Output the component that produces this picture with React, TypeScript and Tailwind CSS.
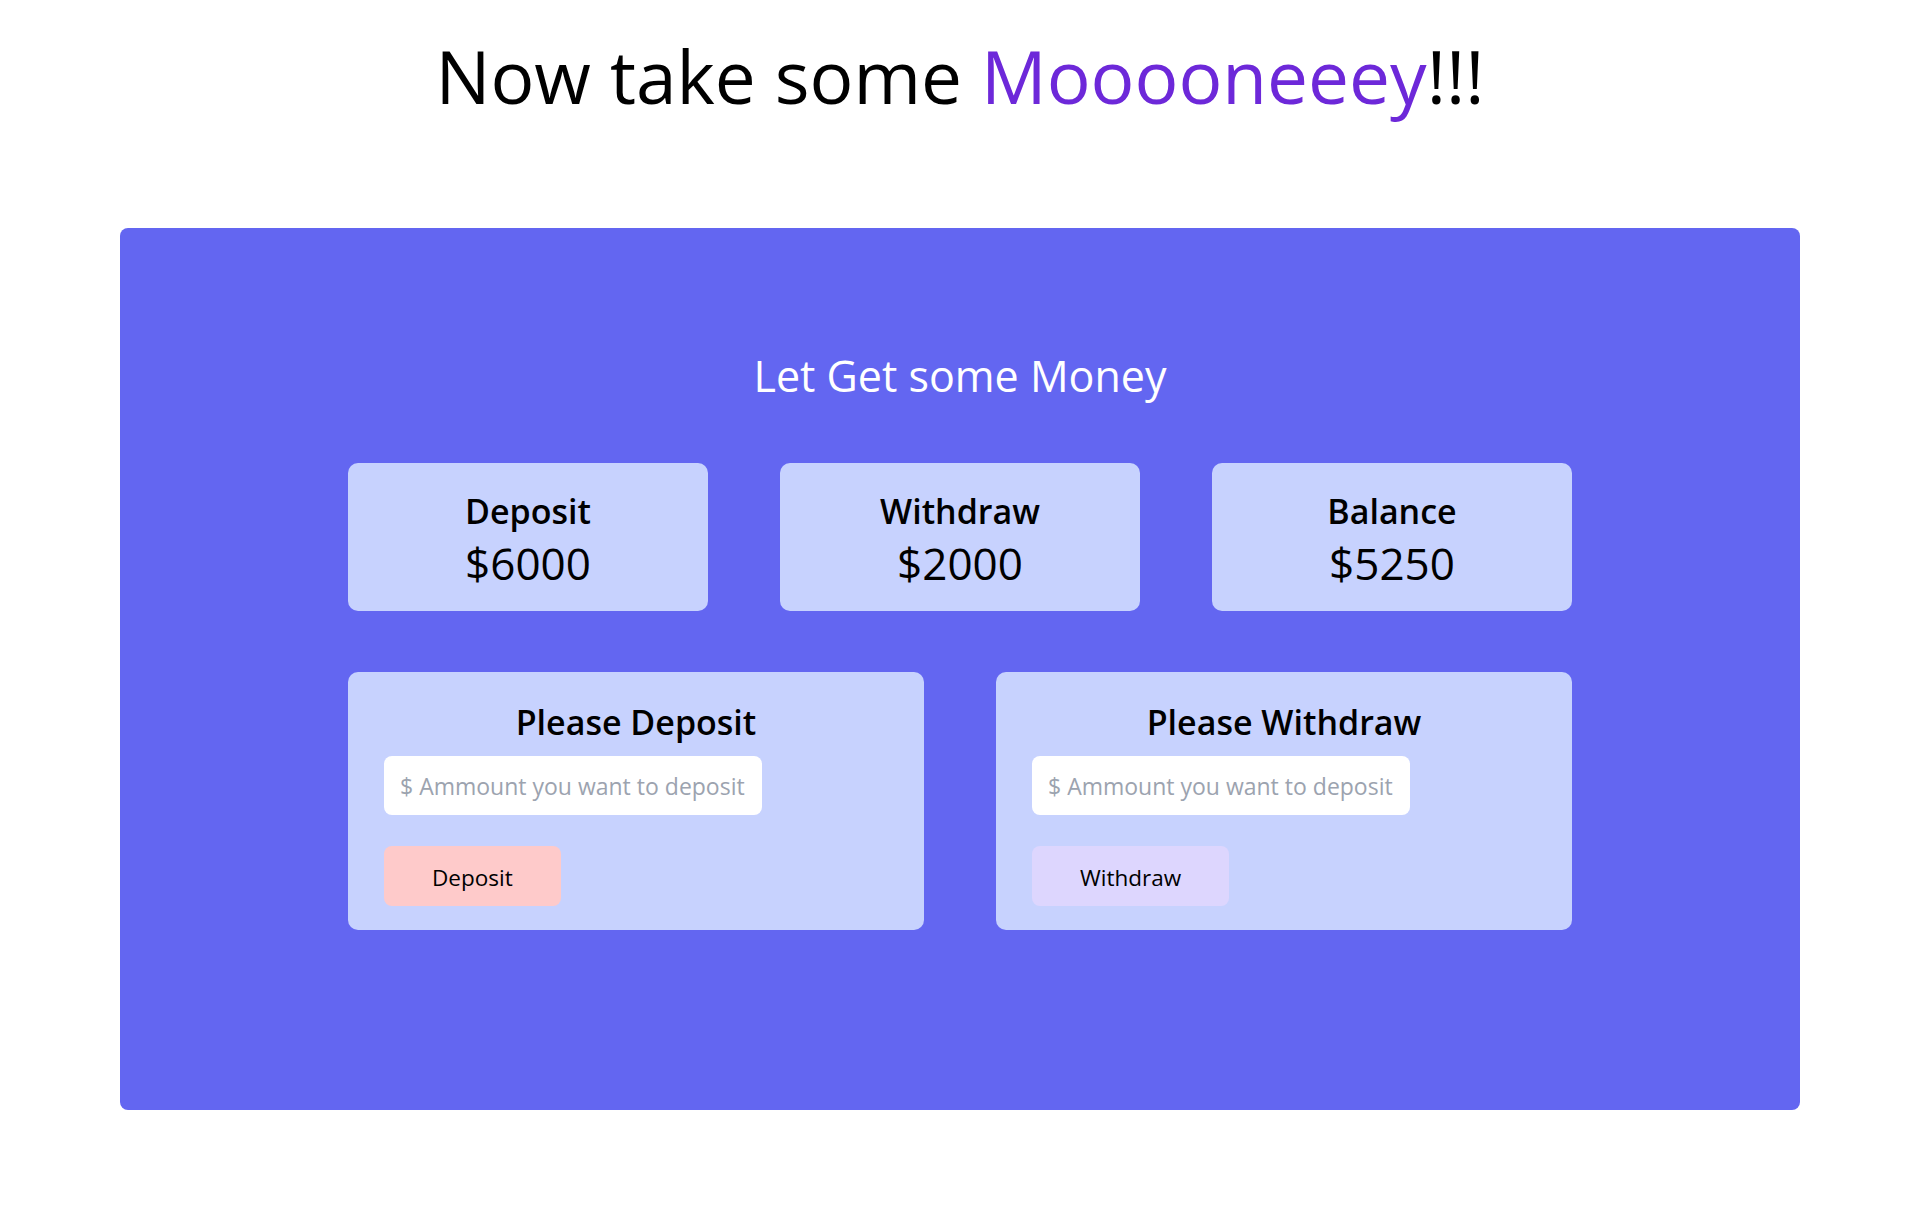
import { useState } from "react";

const font = { fontFamily: '"Open Sans", "Noto Sans", sans-serif' };

const stats = [
  { label: "Deposit", amount: 6000 },
  { label: "Withdraw", amount: 2000 },
  { label: "Balance", amount: 5250 },
];

function StatCard({ label, amount }: { label: string; amount: number }) {
  return (
    <div className="h-[148px] rounded-[10px] bg-[#c7d2fe] flex flex-col items-center justify-center pt-1 text-black">
      <div className="text-[34px] leading-10 font-semibold">{label}</div>
      <div className="mt-2 text-[44px] leading-[48px]">${amount}</div>
    </div>
  );
}

function ActionCard({
  title,
  button,
  buttonClass,
}: {
  title: string;
  button: string;
  buttonClass: string;
}) {
  const [value, setValue] = useState("");
  return (
    <div className="rounded-[10px] bg-[#c7d2fe] px-9 pt-[30px] pb-6 flex flex-col">
      <h3 className="text-center text-[34px] leading-10 font-semibold text-black">{title}</h3>
      <input
        value={value}
        onChange={(e) => setValue(e.target.value)}
        placeholder="$ Ammount you want to deposit"
        className="mt-[14px] h-[59px] w-[378px] rounded-lg bg-white pl-4 pr-2 text-[23px] text-black placeholder:text-[#9ca3af] outline-none"
        style={font}
      />
      <div className="mt-[31px]">
        <button className={`h-[60px] rounded-lg px-12 pt-1 text-[22.5px] text-black ${buttonClass}`} style={font}>
          {button}
        </button>
      </div>
    </div>
  );
}

export default function App() {
  return (
    <div className="min-h-screen bg-white pt-10 pb-16" style={font}>
      <h1 className="text-center text-[73px] leading-[72px] text-black">
        Now take some <span className="text-[#6d28d9]">Mooooneeey</span>!!!
      </h1>

      <div className="mx-[120px] mt-[116px] rounded-lg bg-[#6366f1] pt-[124px] pb-[180px]">
        <h2 className="text-center text-[43px] leading-[48px] text-white">Let Get some Money</h2>

        <div className="mx-auto mt-[63px] w-[1224px]">
          <div className="grid grid-cols-3 gap-[72px]">
            {stats.map((s) => (
              <StatCard key={s.label} label={s.label} amount={s.amount} />
            ))}
          </div>

          <div className="mt-[61px] grid grid-cols-2 gap-[72px]">
            <ActionCard title="Please Deposit" button="Deposit" buttonClass="bg-[#fecaca]" />
            <ActionCard title="Please Withdraw" button="Withdraw" buttonClass="bg-[#ddd6fe]" />
          </div>
        </div>
      </div>
    </div>
  );
}
